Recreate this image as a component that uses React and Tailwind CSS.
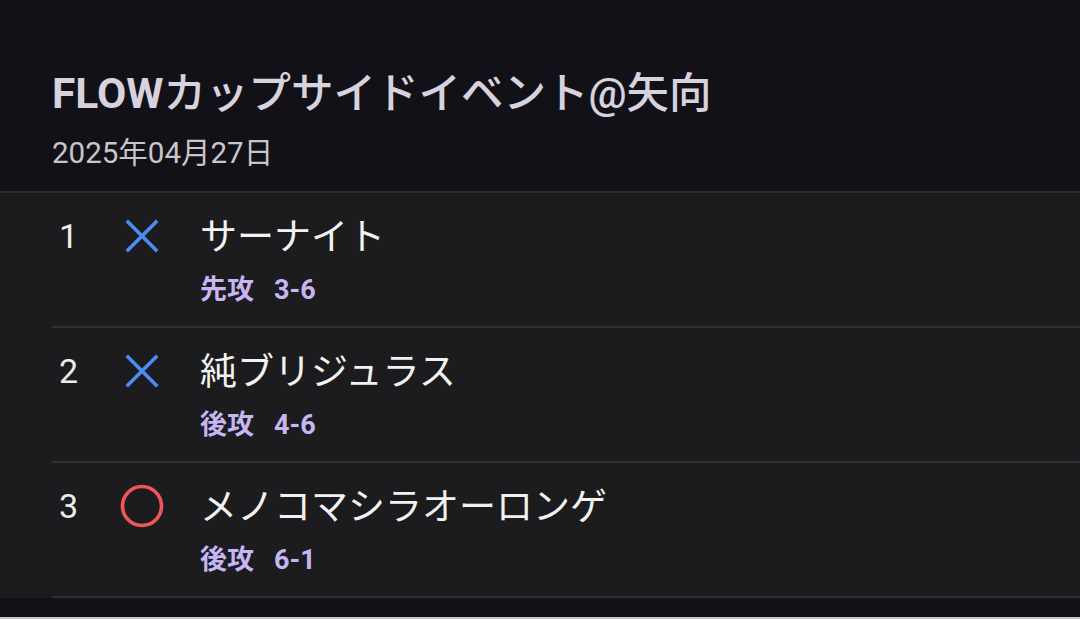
import React from 'react';

const matches = [
  { no: 1, win: false, name: 'サーナイト', turn: '先攻', score: '3-6' },
  { no: 2, win: false, name: '純ブリジュラス', turn: '後攻', score: '4-6' },
  { no: 3, win: true, name: 'メノコマシラオーロンゲ', turn: '後攻', score: '6-1' },
];

function Cross() {
  return (
    <svg width="34" height="34" viewBox="0 0 34 34" fill="none">
      <path d="M3 3L31 31M31 3L3 31" stroke="#4b8cf5" strokeWidth="3.6" strokeLinecap="square" />
    </svg>
  );
}

function Circle() {
  return (
    <svg width="44" height="44" viewBox="0 0 44 44" fill="none">
      <circle cx="22" cy="22" r="19.5" stroke="#f15656" strokeWidth="3.6" />
    </svg>
  );
}

export default function App() {
  return (
    <div
      className="w-[1080px] h-[619px] bg-[#131118] flex flex-col overflow-hidden"
      style={{ fontFamily: 'Roboto, "Noto Sans CJK JP", sans-serif' }}
    >
      <header className="h-[191px] shrink-0 pl-[52px] pt-[68px]">
        <h1 className="text-[42.5px] leading-[52px] font-medium text-[#d7d2dd]">
          <span className="font-bold">FLOW</span>カップサイドイベント@矢向
        </h1>
        <p className="mt-[15px] text-[29.5px] leading-[36px] text-[#c9c5cd]">2025年04月27日</p>
      </header>
      <div className="h-[2px] bg-[#2e2d33] shrink-0" />
      <ul className="bg-[#1c1c1e] shrink-0">
        {matches.map((m) => (
          <li key={m.no} className="ml-[52px] h-[135px] border-b-2 border-[#303034] flex">
            <div className="w-[60px] pl-[7px] pt-[18px] text-[34px] leading-[50px] text-[#ececec]">{m.no}</div>
            <div className="w-[60px] pt-[18px] h-[68px] flex items-center justify-center">
              {m.win ? <Circle /> : <Cross />}
            </div>
            <div className="ml-[28px] pt-[20px]">
              <div className="text-[37px] leading-[50px] text-[#f2f2f2]">{m.name}</div>
              <div className="mt-[11px] flex gap-[20px] text-[27px] leading-[32px] font-bold text-[#c7b6f4]">
                <span>{m.turn}</span>
                <span>{m.score}</span>
              </div>
            </div>
          </li>
        ))}
      </ul>
      <div className="flex-1" />
      <div className="h-[2px] bg-[#c9c9cb] shrink-0" />
    </div>
  );
}
